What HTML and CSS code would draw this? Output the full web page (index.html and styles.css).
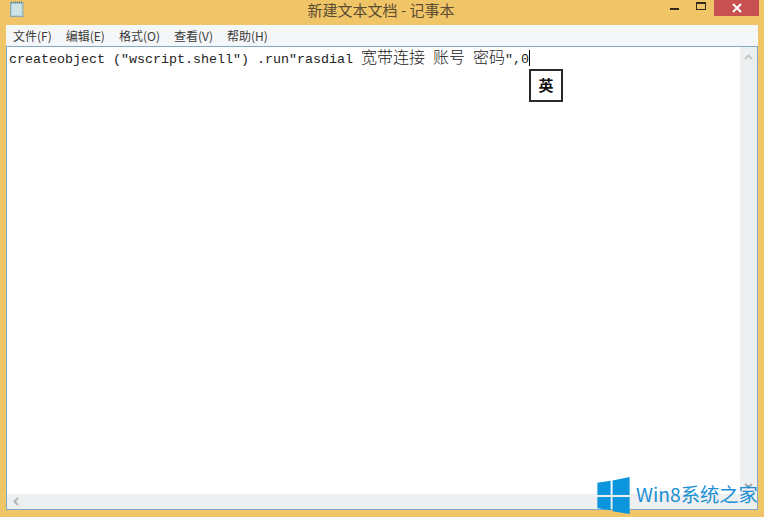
FILE: index.html
```html
<!DOCTYPE html>
<html lang="zh-CN">
<head>
<meta charset="utf-8">
<title>新建文本文档 - 记事本</title>
<link rel="stylesheet" href="styles.css">
</head>
<body>
<div class="window">
  <header class="titlebar">
    <svg class="app-icon" width="16" height="18" viewBox="0 0 16 18">
      <rect x="1.500" y="2.500" width="12.500" height="14" fill="#a9d3df" stroke="#8fa8ad"/>
      <rect x="3" y="4" width="9.500" height="11" fill="#cfe4e2"/>
      <path d="M2 2.500h12" stroke="#6f858c" stroke-width="2" stroke-dasharray="1 1"/>
    </svg>
    <div class="title">新建文本文档 - 记事本</div>
    <div class="controls">
      <div class="ctl ctl-min"><span class="min-bar"></span></div>
      <div class="ctl ctl-max"><span class="max-box"></span></div>
      <div class="ctl ctl-close">
        <svg width="10" height="10" viewBox="0 0 10 10"><path d="M1 1l8 8M9 1l-8 8" stroke="#fff" stroke-width="2"/></svg>
      </div>
    </div>
  </header>
  <nav class="menubar">
    <span class="menu-item">文件(F)</span>
    <span class="menu-item">编辑(E)</span>
    <span class="menu-item">格式(O)</span>
    <span class="menu-item">查看(V)</span>
    <span class="menu-item">帮助(H)</span>
  </nav>
  <main class="editor">
    <div class="editor-row">
      <div class="text-area">
        <div class="line">createobject (″wscript.shell″) .run″rasdial <span class="cjk">宽带连接</span> <span class="cjk">账号</span> <span class="cjk">密码</span>″,0<span class="caret"></span></div>
      </div>
      <div class="vscroll">
        <svg class="arrow" width="9" height="6" viewBox="0 0 9 6"><path d="M1 5l3.500-3.500L8 5" fill="none" stroke="#c4c6c8" stroke-width="2"/></svg>
        <svg class="arrow" width="9" height="6" viewBox="0 0 9 6"><path d="M1 1l3.500 3.500L8 1" fill="none" stroke="#a8aaac" stroke-width="2"/></svg>
      </div>
    </div>
    <div class="hscroll">
      <svg width="6" height="9" viewBox="0 0 6 9"><path d="M5 1L1.500 4.500L5 8" fill="none" stroke="#b4b6b8" stroke-width="2"/></svg>
    </div>
  </main>
  <div class="ime">英</div>
  <div class="watermark">
    <svg class="wm-logo" width="33" height="37" viewBox="0 0 34 39">
      <path d="M0 6l14-2v15H0zM16 3.700L34 0v19H16zM0 21h14v14L0 33zM16 21h18v18l-18-3z" fill="#0a95dc"/>
    </svg>
    <span class="wm-text">Win8系统之家</span>
  </div>
</div>
</body>
</html>
```

FILE: styles.css
```css
html, body {
  margin: 0;
  padding: 0;
  background: #f0c568;
}
.window {
  position: relative;
  width: 764px;
  height: 517px;
  box-sizing: border-box;
  padding: 0 6px 7px;
  display: flex;
  flex-direction: column;
  background: #f0c568;
  overflow: hidden;
  font-family: "Noto Sans CJK SC", "Liberation Sans", sans-serif;
}
.titlebar {
  height: 25px;
  margin: 0 0 0 3px;
  display: flex;
  align-items: flex-start;
  position: relative;
  flex: none;
}
.title {
  position: absolute;
  left: 0;
  right: 0;
  top: 0;
  margin-left: -5px;
  text-align: center;
  font-size: 15px;
  line-height: 20px;
  color: #5b4c33;
}
.controls {
  margin-left: auto;
  display: flex;
  margin-right: -1px;
}
.ctl {
  height: 16px;
  display: flex;
  align-items: center;
  justify-content: center;
}
.ctl-min {
  width: 27px;
}
.min-bar {
  width: 9px;
  height: 2px;
  margin-top: 2px;
  background: #33281a;
}
.ctl-max {
  width: 26px;
}
.max-box {
  width: 8px;
  height: 5px;
  margin-top: -4px;
  border: 1px solid #33281a;
  border-top-width: 2px;
  box-sizing: content-box;
}
.ctl-close {
  width: 45px;
  background: #c75050;
}
.menubar {
  height: 21px;
  flex: none;
  display: flex;
  gap: 14px;
  background: #f5f6f7;
  padding-left: 7px;
  align-items: center;
  font-size: 12px;
  color: #3a3a3a;
}
.menu-item {
  white-space: nowrap;
}
.editor {
  flex: 1;
  min-height: 0;
  display: flex;
  flex-direction: column;
  background: #fff;
  border: 1px solid #7fa9c4;
}
.editor-row {
  flex: 1;
  min-height: 0;
  display: flex;
}
.text-area {
  flex: 1;
  padding: 1px 0 0 2px;
}
.line {
  font-family: "Liberation Mono", "Noto Sans CJK SC", monospace;
  font-size: 13.333px;
  line-height: 17px;
  height: 17px;
  color: #222;
  white-space: pre;
}
.cjk {
  font-family: "Noto Sans CJK SC", sans-serif;
  font-size: 16px;
  font-weight: 300;
  line-height: 17px;
}
.caret {
  display: inline-block;
  width: 1px;
  height: 16px;
  vertical-align: -3px;
  background: #000;
}
.vscroll {
  width: 17px;
  flex: none;
  background: #eeeff0;
  display: flex;
  flex-direction: column;
  justify-content: space-between;
  align-items: center;
  padding: 7px 0 5px;
  box-sizing: border-box;
}
.hscroll {
  height: 15px;
  flex: none;
  background: #eeeff0;
  display: flex;
  align-items: center;
  padding-left: 6px;
}
.ime {
  position: absolute;
  left: 529px;
  top: 69px;
  width: 30px;
  height: 29px;
  border: 2px solid #2a2a2a;
  background: #fff;
  text-align: center;
  font-size: 15px;
  font-weight: 700;
  line-height: 28px;
  color: #111;
}
.watermark {
  position: absolute;
  left: 597px;
  top: 477px;
  display: flex;
  align-items: flex-start;
  gap: 6px;
}
.wm-text {
  font-family: "Noto Sans CJK SC", "Liberation Sans", sans-serif;
  font-size: 19.300px;
  line-height: 24px;
  color: #1c8fd3;
  white-space: nowrap;
  margin-top: 5px;
}
```
